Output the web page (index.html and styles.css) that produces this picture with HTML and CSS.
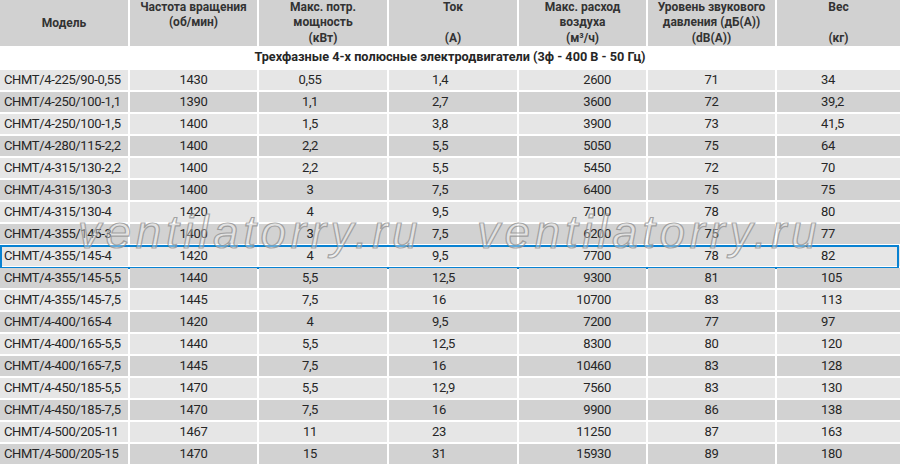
FILE: index.html
```html
<!DOCTYPE html>
<html lang="ru">
<head>
<meta charset="utf-8">
<title>Трехфазные 4-х полюсные электродвигатели</title>
<link rel="stylesheet" href="styles.css">
</head>
<body>
<div class="table">
  <div class="row head">
    <div class="h mid">Модель</div>
    <div class="h">Частота вращения<br>(об/мин)</div>
    <div class="h">Макс. потр.<br>мощность<br>(кВт)</div>
    <div class="h">Ток<br>&nbsp;<br>(A)</div>
    <div class="h">Макс. расход<br>воздуха<br>(м³/ч)</div>
    <div class="h">Уровень звукового<br>давления (дБ(А))<br>(dB(A))</div>
    <div class="h">Вес<br>&nbsp;<br>(кг)</div>
  </div>
  <div class="section">Трехфазные 4-х полюсные электродвигатели (3ф - 400 В - 50 Гц)</div>
  <div class="row light"><div class="c1">СНМТ/4-225/90-0,55</div><div class="c2">1430</div><div class="c3">0,55</div><div class="c4">1,4</div><div class="c5">2600</div><div class="c6">71</div><div class="c7">34</div></div>
  <div class="row dark"><div class="c1">СНМТ/4-250/100-1,1</div><div class="c2">1390</div><div class="c3">1,1</div><div class="c4">2,7</div><div class="c5">3600</div><div class="c6">72</div><div class="c7">39,2</div></div>
  <div class="row light"><div class="c1">СНМТ/4-250/100-1,5</div><div class="c2">1400</div><div class="c3">1,5</div><div class="c4">3,8</div><div class="c5">3900</div><div class="c6">73</div><div class="c7">41,5</div></div>
  <div class="row dark"><div class="c1">СНМТ/4-280/115-2,2</div><div class="c2">1400</div><div class="c3">2,2</div><div class="c4">5,5</div><div class="c5">5050</div><div class="c6">75</div><div class="c7">64</div></div>
  <div class="row light"><div class="c1">СНМТ/4-315/130-2,2</div><div class="c2">1400</div><div class="c3">2,2</div><div class="c4">5,5</div><div class="c5">5450</div><div class="c6">72</div><div class="c7">70</div></div>
  <div class="row dark"><div class="c1">СНМТ/4-315/130-3</div><div class="c2">1400</div><div class="c3">3</div><div class="c4">7,5</div><div class="c5">6400</div><div class="c6">75</div><div class="c7">75</div></div>
  <div class="row light"><div class="c1">СНМТ/4-315/130-4</div><div class="c2">1420</div><div class="c3">4</div><div class="c4">9,5</div><div class="c5">7100</div><div class="c6">78</div><div class="c7">80</div></div>
  <div class="row dark"><div class="c1">СНМТ/4-355/145-3</div><div class="c2">1400</div><div class="c3">3</div><div class="c4">7,5</div><div class="c5">6200</div><div class="c6">75</div><div class="c7">77</div></div>
  <div class="row light selected"><div class="c1">СНМТ/4-355/145-4</div><div class="c2">1420</div><div class="c3">4</div><div class="c4">9,5</div><div class="c5">7700</div><div class="c6">78</div><div class="c7">82</div></div>
  <div class="row dark"><div class="c1">СНМТ/4-355/145-5,5</div><div class="c2">1440</div><div class="c3">5,5</div><div class="c4">12,5</div><div class="c5">9300</div><div class="c6">81</div><div class="c7">105</div></div>
  <div class="row light"><div class="c1">СНМТ/4-355/145-7,5</div><div class="c2">1445</div><div class="c3">7,5</div><div class="c4">16</div><div class="c5">10700</div><div class="c6">83</div><div class="c7">113</div></div>
  <div class="row dark"><div class="c1">СНМТ/4-400/165-4</div><div class="c2">1420</div><div class="c3">4</div><div class="c4">9,5</div><div class="c5">7200</div><div class="c6">77</div><div class="c7">97</div></div>
  <div class="row light"><div class="c1">СНМТ/4-400/165-5,5</div><div class="c2">1440</div><div class="c3">5,5</div><div class="c4">12,5</div><div class="c5">8300</div><div class="c6">80</div><div class="c7">120</div></div>
  <div class="row dark"><div class="c1">СНМТ/4-400/165-7,5</div><div class="c2">1445</div><div class="c3">7,5</div><div class="c4">16</div><div class="c5">10460</div><div class="c6">83</div><div class="c7">128</div></div>
  <div class="row light"><div class="c1">СНМТ/4-450/185-5,5</div><div class="c2">1470</div><div class="c3">5,5</div><div class="c4">12,9</div><div class="c5">7560</div><div class="c6">83</div><div class="c7">130</div></div>
  <div class="row dark"><div class="c1">СНМТ/4-450/185-7,5</div><div class="c2">1470</div><div class="c3">7,5</div><div class="c4">16</div><div class="c5">9900</div><div class="c6">86</div><div class="c7">138</div></div>
  <div class="row light"><div class="c1">СНМТ/4-500/205-11</div><div class="c2">1467</div><div class="c3">11</div><div class="c4">23</div><div class="c5">11250</div><div class="c6">87</div><div class="c7">163</div></div>
  <div class="row dark"><div class="c1">СНМТ/4-500/205-15</div><div class="c2">1470</div><div class="c3">15</div><div class="c4">31</div><div class="c5">15930</div><div class="c6">89</div><div class="c7">180</div></div>
  <div class="watermark wm1">ventilatorry.ru</div>
  <div class="watermark wm2">ventilatorry.ru</div>
</div>
</body>
</html>
```
FILE: styles.css
```css
html, body {
  margin: 0;
  padding: 0;
  background: #ffffff;
}
body {
  width: 900px;
  height: 466px;
  overflow: hidden;
  font-family: Roboto, "Liberation Sans", sans-serif;
  color: #262626;
}
.table {
  position: relative;
  display: flex;
  flex-direction: column;
  row-gap: 2px;
  width: 900px;
}
.row {
  display: grid;
  grid-template-columns: 128px 127px 128px 128px 127px 127px 1fr;
  column-gap: 2px;
  position: relative;
}
.row > div {
  height: 20px;
  line-height: 20px;
  font-size: 13px;
  letter-spacing: -0.35px;
  white-space: nowrap;
}
.row.light > div { background: #e6e6e6; }
.row.dark > div { background: #d2d2d2; }

.head > .h {
  height: 46px;
  line-height: 15.33px;
  background: #d1d1d1;
  font-weight: 700;
  font-size: 12px;
  letter-spacing: 0;
  text-align: center;
  color: #333333;
}
.head > .h.mid {
  line-height: 46px;
}
.section {
  height: 22px;
  line-height: 22px;
  margin-top: -2px;
  text-align: center;
  font-weight: 700;
  font-size: 12.7px;
  color: #262626;
}
.c1 { padding-left: 4px; }
.c2 { text-align: center; }
.c3 { text-align: center; padding-right: 26px; }
.c4 { padding-left: 43px; }
.c5 { text-align: right; padding-right: 35px; }
.c6 { text-align: center; }
.c7 { padding-left: 44px; }

.selected::after {
  content: "";
  position: absolute;
  top: -1px;
  bottom: -3px;
  left: 0;
  right: 1px;
  border: 2px solid #0882d2;
  pointer-events: none;
}
.watermark {
  position: absolute;
  top: 209px;
  font-family: "Liberation Sans", Arial, sans-serif;
  font-style: italic;
  font-size: 46px;
  line-height: 46px;
  letter-spacing: 4.6px;
  color: rgba(255, 255, 255, 0.35);
  -webkit-text-stroke: 1.2px rgba(140, 140, 140, 0.75);
  white-space: nowrap;
  pointer-events: none;
}
.wm1 { left: 78px; }
.wm2 { left: 477px; }
```
